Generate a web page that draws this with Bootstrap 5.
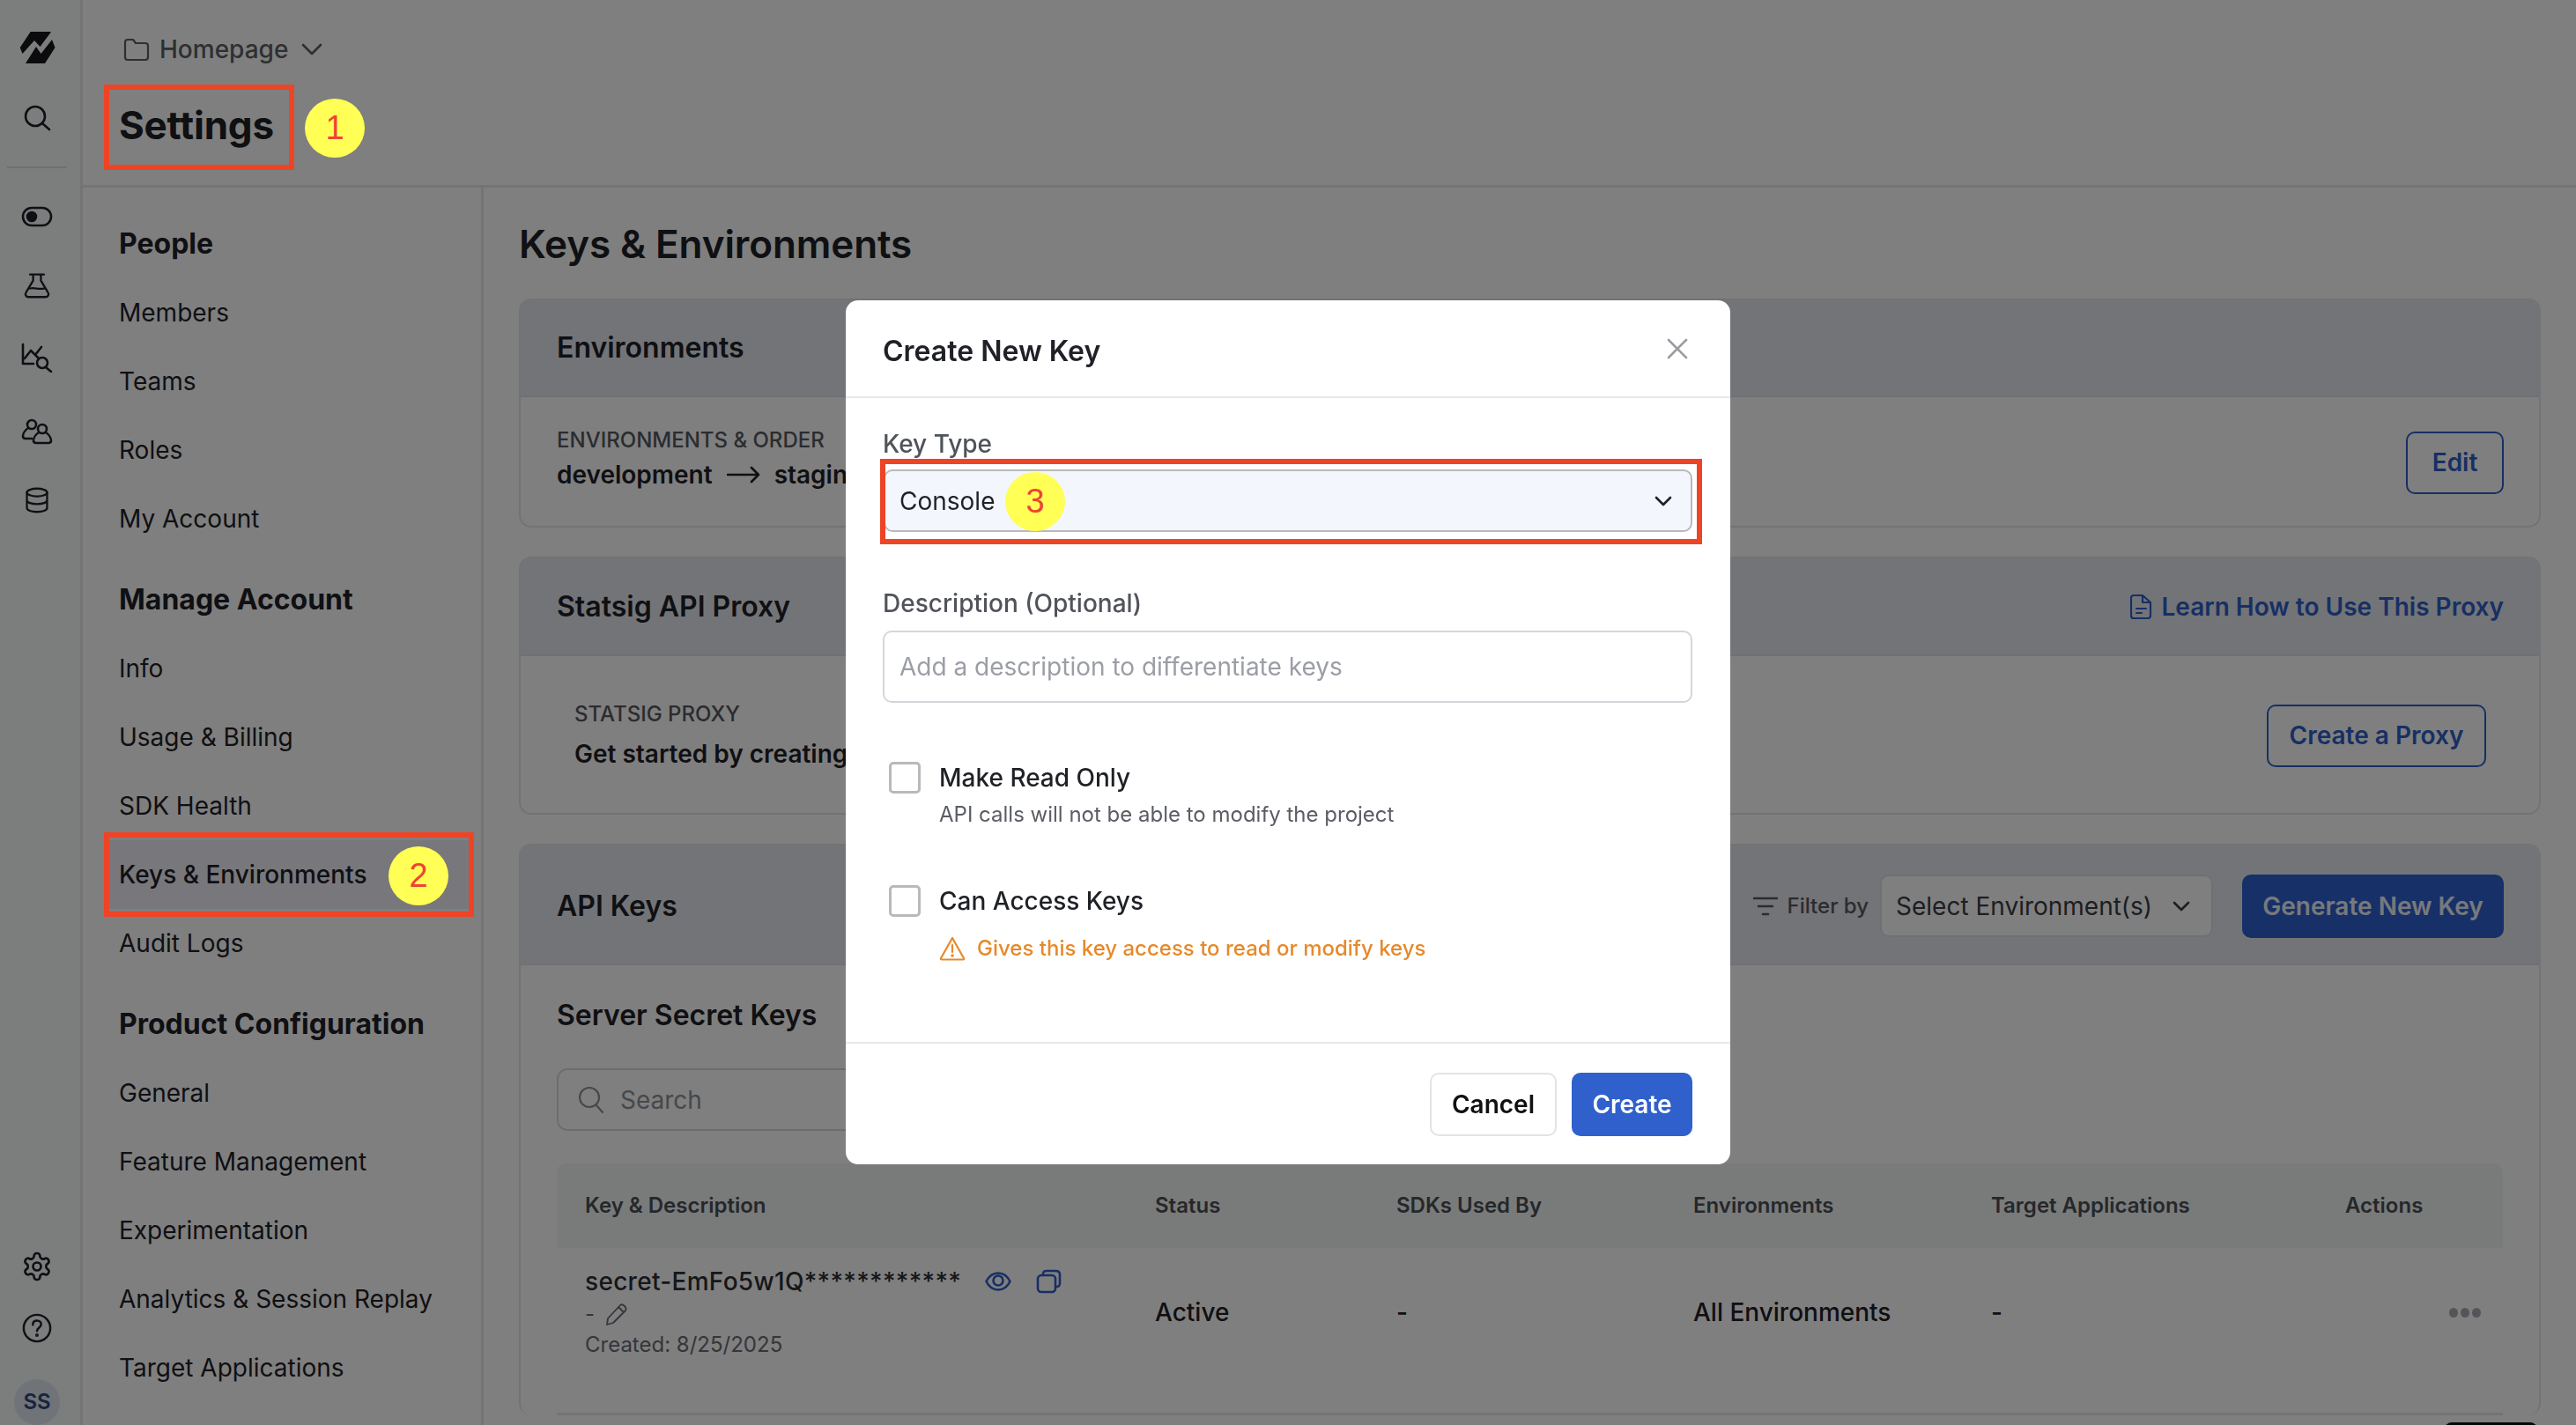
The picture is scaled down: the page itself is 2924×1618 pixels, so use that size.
<!DOCTYPE html>
<html lang="en">
<head>
<meta charset="UTF-8" />
<title>Settings</title>
<link rel="stylesheet" href="https://cdn.jsdelivr.net/npm/bootstrap@5.3.3/dist/css/bootstrap.min.css" />
<style>
  html, body { height: 1618px; overflow: hidden; }
  body { font-family: Inter, "Liberation Sans", sans-serif; font-size: 28px; color: #1f2126; background: #fff; }
  svg { display: block; flex-shrink: 0; }
  .ic { fill: none; stroke: currentColor; stroke-width: 2.6; stroke-linecap: round; stroke-linejoin: round; }
  .ic-thin { stroke-width: 2.2; }
  .ic-hair { stroke-width: 1.8; }

  .app-shell { height: 1618px; }
  .rail { width: 94px; background: #f8fcfc; border-right: 3px solid #e8e9eb; padding: 26px 7px 0 0; flex-shrink: 0; color: #1f2126; }
  .rail-rule { width: 68px; height: 2px; background: #dfe1e4; margin: 38px 0 43px; }
  .rail-search { margin-top: 35px; }
  .rail-flask { margin-top: 51px; }
  .rail-chart { margin-top: 50px; }
  .rail-people { margin-top: 52px; }
  .rail-db { margin-top: 48px; }
  .rail-help { margin-top: 35px; }
  .avatar { width: 52px; height: 52px; background: #e1e6ef; color: #2c4a80; font-size: 24px; font-weight: 600; margin-top: 41px; }

  .top-head { height: 213px; border-bottom: 3px solid #e8e9eb; padding: 36px 0 0 41px; flex-shrink: 0; }
  .crumb { color: #5c5f66; font-weight: 500; gap: 11px; height: 40px; }
  .crumb-folder { margin-left: 5px; }
  .page-title { font-size: 44px; font-weight: 700; line-height: 60px; margin: 36px 0 0; letter-spacing: -0.2px; }

  .side { width: 455px; border-right: 3px solid #e8e9eb; padding: 42px 0 0 41px; flex-shrink: 0; }
  .side-head { font-size: 32px; font-weight: 700; line-height: 44px; margin: 0 0 17px; }
  .side-list { list-style: none; padding: 0; margin-bottom: 31px; }
  .side-list li { height: 78px; line-height: 78px; }
  .side-active { background: #f0f1f8; margin-left: -17px; padding-left: 17px; margin-right: 10px; font-weight: 500; }

  .content { padding: 42px 40px 0 40px; min-width: 0; }
  .content-title { font-size: 44px; font-weight: 600; line-height: 44px; margin: 0 0 40px; letter-spacing: -0.1px; }
  .pane { border: 2px solid #e4e6ea; border-radius: 14px; margin-bottom: 33px; overflow: hidden; }
  .pane-open { overflow: visible; border-bottom: 0; margin-bottom: 0; }
  .pane-head { background: #e6e9ef; border-bottom: 2px solid #e0e2e7; height: 110px; padding: 0 40px 0 41px; font-size: 32px; font-weight: 600; }
  .pane-env { height: 260px; }
  .pane-proxy { height: 293px; }
  .pane-head-proxy { height: 111px; }
  .pane-head-keys { height: 136px; padding-top: 3px; border-radius: 12px 12px 0 0; }
  .micro { font-size: 24px; color: #55585f; font-weight: 500; line-height: 30px; }
  .strong-row { font-weight: 600; line-height: 36px; margin-top: 6px; white-space: nowrap; gap: 16px; }
  .strong-proxy { margin-top: 12px; }
  .pane-env-body { height: 148px; padding: 0 40px 0 41px; }
  .env-text { margin-top: -8px; }
  .pane-proxy-body { height: 180px; padding: 0 60px 0 61px; }
  .btn-line { border: 2px solid #2f5fc9; color: #2f5fc9; border-radius: 10px; height: 71px; font-size: 28px; font-weight: 600; padding: 0; display: inline-flex; align-items: center; justify-content: center; background: transparent; width: 249px; }
  .btn-edit { width: 111px; }
  .link-doc { color: #2f5fc9; font-weight: 600; font-size: 28px; gap: 11px; text-decoration: none; }

  .filter-lab { color: #55585f; font-size: 24px; font-weight: 500; gap: 11px; margin-right: 13px; white-space: nowrap; }
  .env-pick { width: 378px; height: 71px; border: 2px solid #dfe1e5; border-radius: 10px; padding: 0 24px 0 16px; color: #3a3d44; background: #fff; margin-right: 33px; white-space: nowrap; flex-shrink: 0; font-size: 28px; font-weight: 400; }
  .btn-gen { background: #2f60ce; color: #eef2fb; border: 0; border-radius: 10px; height: 72px; width: 297px; font-size: 28px; font-weight: 600; padding: 0; flex-shrink: 0; }
  .sub-head { font-size: 32px; font-weight: 600; line-height: 44px; margin: 35px 0 38px 41px; }
  .search-box { width: 560px; height: 71px; margin-left: 41px; border: 2px solid #d9dbe0; border-radius: 12px; padding: 0 22px; color: #8d9097; gap: 18px; margin-bottom: 37px; }
  .key-table { table-layout: fixed; width: 2209px; margin: 0 0 0 41px; --bs-table-bg: transparent; }
  .col-key { width: 647px; }
  .col-status { width: 274px; }
  .col-sdk { width: 337px; }
  .col-env { width: 338px; }
  .col-target { width: 402px; }
  .key-table th { background: #f2f6f4; height: 96px; font-size: 24px; font-weight: 600; color: #4c4f56; vertical-align: middle; padding: 0 0 0 32px; border: 0; }
  .key-table th:first-child { border-top-left-radius: 10px; }
  .key-table th:last-child { border-top-right-radius: 10px; }
  .key-table td { height: 188px; padding: 12px 0 52px 32px; vertical-align: middle; border-bottom: 3px solid #e8e9eb; font-weight: 500; color: #1f2126; font-size: 28px; }
  .key-line { line-height: 36px; height: 36px; color: #2c2e33; letter-spacing: .3px; }
  .key-line .ico-eye { margin-left: 27px; color: #2f5fc9; }
  .key-line .ico-copy { margin-left: 28px; color: #2f5fc9; }
  .muted-line { color: #6a6d74; height: 38px; gap: 12px; line-height: 38px; font-size: 24px; font-weight: 400; }
  .created { color: #6a6d74; font-size: 24px; font-weight: 400; line-height: 32px; }
  .dots { gap: 3px; justify-content: flex-end; padding-right: 25px; }
  .dots i { width: 10px; height: 11px; border-radius: 50%; background: #a9abb0; display: block; }
  .peek { position: absolute; left: 2775px; top: 1615px; width: 105px; height: 10px; background: #111; border-radius: 8px 8px 0 0; z-index: 1; }

  /* modal */
  .modal-backdrop { --bs-backdrop-opacity: .5; }
  .modal.d-block { overflow: hidden; }
  .key-dialog { max-width: none; width: 1004px; margin: 341px auto 0; }
  .key-dialog .modal-content { height: 981px; border: 0; border-radius: 14px; }
  .key-dialog .modal-header { height: 111px; padding: 0 48px 0 42px; border-bottom: 2px solid #e7e8ea; flex-shrink: 0; }
  .key-dialog .modal-title { font-size: 32px; font-weight: 600; color: #1f2126; margin-top: 6px; }
  .x-close { background: none; border: 0; padding: 0; color: #9a9ca1; }
  .key-dialog .modal-body { padding: 34px 43px 0 42px; flex: 1; }
  .field-lab { display: block; color: #50535a; font-weight: 500; line-height: 36px; margin: 0 0 11px; }
  .field-lab-desc { margin-bottom: 13px; }
  .type-pick { height: 71px; background: #f3f6fd; border: 2px solid #b9b9bb; border-radius: 10px; padding: 0 21px 0 16px; color: #1f2126; margin-bottom: 63px; margin-left: 1px; }
  .desc-box { height: 82px; border: 2px solid #d5d6db; border-radius: 10px; padding: 0 17px; font-size: 28px; color: #1f2126; }
  .desc-box::placeholder { color: #9b9ea5; }
  .desc-box:focus { border-color: #d5d6db; box-shadow: none; }
  .opt-row { gap: 21px; }
  .opt-first { margin-top: 63px; }
  .opt-second { margin-top: 59px; }
  .opt-box { width: 36px; height: 36px; border: 3px solid #b9b9b9; border-radius: 5px; background: #fff; appearance: none; flex-shrink: 0; margin: 4px 0 0 7px; }
  .opt-name { font-weight: 500; line-height: 44px; color: #1f2126; }
  .opt-note { font-size: 24px; color: #5a5d64; line-height: 34px; margin-top: 3px; }
  .opt-warn { font-size: 24px; color: #e58a2c; font-weight: 500; gap: 13px; margin-top: 14px; }
  .key-dialog .modal-footer { height: 139px; padding: 0 43px; gap: 17px; border-top: 2px solid #e7e8ea; flex-shrink: 0; }
  .key-dialog .modal-footer > * { margin: 0; }
  .btn-cancel { width: 144px; height: 72px; border: 2px solid #e2e3e7; border-radius: 10px; background: #fff; color: #111; font-size: 28px; font-weight: 600; padding: 0; }
  .btn-create { width: 137px; height: 72px; border: 0; border-radius: 10px; background: #3060cc; color: #fff; font-size: 28px; font-weight: 600; padding: 0; }

  /* screenshot annotations */
  .note-box { position: absolute; border: 6px solid #ee4426; z-index: 1060; }
  .note-a { left: 118px; top: 96px; width: 216px; height: 97px; }
  .note-b { left: 118px; top: 945px; width: 420px; height: 96px; }
  .note-c { left: 999px; top: 521px; width: 933px; height: 97px; }
  .note-dot { position: absolute; width: 68px; height: 67px; border-radius: 50%; background: #ffff55; color: #ee4433; font-family: "Liberation Sans", sans-serif; font-size: 38px; z-index: 1061; }
  .dot-a { left: 346px; top: 112px; }
  .dot-b { left: 441px; top: 961px; }
  .dot-c { left: 1141px; top: 536px; }
</style>
</head>
<body>
<div class="app-shell d-flex">
  <nav class="rail d-flex flex-column align-items-center">
    <svg width="60" height="56" viewBox="0 0 60 56" fill="#16171b"><path d="M10.7 28 22.700 10H46L44 13 33.500 27 27 20 13.500 35Z"/><path d="M17 46 29 27 34.500 35 47 19 50.500 28 39 46Z"/></svg>
    <svg class="ic rail-search" width="34" height="34" viewBox="0 0 34 34"><circle cx="15" cy="15" r="11"/><path d="M23 23l8 7"/></svg>
    <div class="rail-rule"></div>
    <svg class="ic" width="36" height="24" viewBox="0 0 36 24"><rect x="2" y="2" width="32" height="20" rx="10"/><circle cx="12" cy="12" r="5" fill="currentColor"/></svg>
    <svg class="ic rail-flask" width="30" height="30" viewBox="0 0 34 34"><path d="M8 3h18M12 3v8L3 26c-2 3 0 6 3 6h22c3 0 5-3 3-6L22 11V3"/><path d="M8 21c6-2 11 2 18 0"/></svg>
    <svg class="ic rail-chart" width="36" height="34" viewBox="0 0 36 34"><path d="M2 2v22h12"/><path d="M4 18l7-9 9 9M16 14l7-9"/><circle cx="24" cy="23" r="6"/><path d="M28 28l6 5"/></svg>
    <svg class="ic rail-people" width="36" height="30" viewBox="0 0 36 30"><circle cx="12" cy="7" r="5"/><path d="M8 11c-3 2-6 6-6 9 0 2 1 3 3 3h7"/><circle cx="24" cy="12" r="5"/><path d="M20 16c-3 2-6 6-6 9 0 2 1 3 3 3h14c2 0 3-1 3-3 0-3-3-7-6-9"/></svg>
    <svg class="ic rail-db" width="28" height="30" viewBox="0 0 30 34"><ellipse cx="15" cy="7" rx="13" ry="5"/><path d="M2 7v20c0 3 6 5 13 5s13-2 13-5V7M2 17c0 3 6 5 13 5s13-2 13-5"/></svg>
    <div class="flex-grow-1"></div>
    <svg class="ic ic-hair" width="36" height="36" viewBox="0 0 24 24"><circle cx="12" cy="12" r="3"/><path d="M12.220 2h-.44a2 2 0 0 0-2 2v.18a2 2 0 0 1-1 1.730l-.43.25a2 2 0 0 1-2 0l-.15-.08a2 2 0 0 0-2.730.73l-.22.38a2 2 0 0 0 .73 2.730l.15.1a2 2 0 0 1 1 1.720v.51a2 2 0 0 1-1 1.740l-.15.09a2 2 0 0 0-.73 2.730l.22.38a2 2 0 0 0 2.730.73l.15-.08a2 2 0 0 1 2 0l.43.25a2 2 0 0 1 1 1.730V20a2 2 0 0 0 2 2h.44a2 2 0 0 0 2-2v-.18a2 2 0 0 1 1-1.730l.43-.25a2 2 0 0 1 2 0l.15.08a2 2 0 0 0 2.730-.73l.22-.39a2 2 0 0 0-.73-2.730l-.15-.08a2 2 0 0 1-1-1.740v-.5a2 2 0 0 1 1-1.740l.15-.09a2 2 0 0 0 .73-2.730l-.22-.38a2 2 0 0 0-2.730-.73l-.15.08a2 2 0 0 1-2 0l-.43-.25a2 2 0 0 1-1-1.730V4a2 2 0 0 0-2-2z"/></svg>
    <svg class="ic rail-help" width="34" height="34" viewBox="0 0 36 36"><circle cx="18" cy="18" r="16"/><path d="M13 14c0-3 2-5 5-5s5 2 5 4.500c0 4-5 4-5 8"/><circle cx="18" cy="26.500" r=".8" fill="currentColor"/></svg>
    <div class="avatar rounded-circle d-flex align-items-center justify-content-center">SS</div>
  </nav>

  <div class="flex-grow-1 d-flex flex-column" style="min-width:0">
    <header class="top-head">
      <div class="crumb d-flex align-items-center">
        <svg class="ic ic-thin crumb-folder" width="30" height="28" viewBox="0 0 30 28"><path d="M2 6c0-2 1-3 3-3h6l3 4h11c2 0 3 1 3 3v13c0 2-1 3-3 3H5c-2 0-3-1-3-3z"/></svg>
        <span>Homepage</span>
        <svg class="ic ms-1" width="24" height="14" viewBox="0 0 24 14"><path d="M2 2l10 10L22 2"/></svg>
      </div>
      <h1 class="page-title">Settings</h1>
    </header>

    <div class="d-flex flex-grow-1" style="min-height:0">
      <aside class="side">
        <h2 class="side-head">People</h2>
        <ul class="side-list">
          <li>Members</li><li>Teams</li><li>Roles</li><li>My Account</li>
        </ul>
        <h2 class="side-head">Manage Account</h2>
        <ul class="side-list">
          <li>Info</li><li>Usage &amp; Billing</li><li>SDK Health</li><li class="side-active">Keys &amp; Environments</li><li>Audit Logs</li>
        </ul>
        <h2 class="side-head">Product Configuration</h2>
        <ul class="side-list">
          <li>General</li><li>Feature Management</li><li>Experimentation</li><li>Analytics &amp; Session Replay</li><li>Target Applications</li>
        </ul>
      </aside>

      <main class="content flex-grow-1">
        <h2 class="content-title">Keys &amp; Environments</h2>

        <section class="pane pane-env">
          <div class="pane-head d-flex align-items-center">Environments</div>
          <div class="pane-env-body d-flex align-items-center justify-content-between">
            <div class="env-text">
              <div class="micro">ENVIRONMENTS &amp; ORDER</div>
              <div class="strong-row d-flex align-items-center">development
                <svg class="ic" width="38" height="20" viewBox="0 0 38 20"><path d="M1 10h35M28 2l8 8-8 8"/></svg>
                staging
              </div>
            </div>
            <button class="btn-line btn-edit" type="button">Edit</button>
          </div>
        </section>

        <section class="pane pane-proxy">
          <div class="pane-head pane-head-proxy d-flex align-items-center justify-content-between">
            <span>Statsig API Proxy</span>
            <a class="link-doc d-flex align-items-center" href="#">
              <svg class="ic ic-thin" width="25" height="30" viewBox="0 0 25 30"><path d="M4 2h10l9 8v15c0 2-1 3-3 3H4c-2 0-3-1-3-3V5c0-2 1-3 3-3zM14 2v8h9M7 17h11M7 22h6"/></svg>
              Learn How to Use This Proxy
            </a>
          </div>
          <div class="pane-proxy-body d-flex align-items-center justify-content-between">
            <div>
              <div class="micro">STATSIG PROXY</div>
              <div class="strong-row strong-proxy">Get started by creating a proxy</div>
            </div>
            <button class="btn-line" type="button">Create a Proxy</button>
          </div>
        </section>

        <section class="pane pane-open">
          <div class="pane-head pane-head-keys d-flex align-items-center justify-content-between">
            <span>API Keys</span>
            <div class="d-flex align-items-center">
              <div class="filter-lab d-flex align-items-center">
                <svg class="ic" width="28" height="22" viewBox="0 0 28 22"><path d="M1 2h26M6 11h16M11 20h6"/></svg>
                Filter by
              </div>
              <div class="env-pick d-flex align-items-center justify-content-between">
                <span>Select Environment(s)</span>
                <svg class="ic" width="20" height="12" viewBox="0 0 20 12"><path d="M2 2l8 8 8-8"/></svg>
              </div>
              <button class="btn-gen" type="button">Generate New Key</button>
            </div>
          </div>
          <h3 class="sub-head">Server Secret Keys</h3>
          <div class="search-box d-flex align-items-center">
            <svg class="ic ic-thin" width="30" height="32" viewBox="0 0 30 32"><circle cx="13" cy="13" r="11"/><path d="M21 22l7 8"/></svg>
            <span>Search</span>
          </div>
          <table class="table key-table">
            <colgroup><col class="col-key"><col class="col-status"><col class="col-sdk"><col class="col-env"><col class="col-target"><col></colgroup>
            <thead>
              <tr><th>Key &amp; Description</th><th>Status</th><th>SDKs Used By</th><th>Environments</th><th>Target Applications</th><th>Actions</th></tr>
            </thead>
            <tbody>
              <tr>
                <td>
                  <div class="key-line d-flex align-items-center">
                    <span>secret-EmFo5w1Q************</span>
                    <svg class="ic ico-eye" width="30" height="22" viewBox="0 0 30 22"><path d="M1.500 11C5 4 10 1.500 15 1.500S25 4 28.500 11C25 18 20 20.500 15 20.500S5 18 1.500 11z"/><circle cx="15" cy="10" r="5.500"/></svg>
                    <svg class="ic ico-copy" width="29" height="28" viewBox="0 0 29 28"><rect x="2" y="7" width="20" height="19" rx="4"/><path d="M8 6c0-3 1-4 4-4h10c3 0 5 1 5 4v10c0 3-1 4-4 4"/></svg>
                  </div>
                  <div class="muted-line d-flex align-items-center">
                    <span>-</span>
                    <svg class="ic ic-hair" width="26" height="26" viewBox="0 0 26 26"><path d="M3 18 17 3c1-1 3-1 5 1s2 3 1 5L9 23l-7 2zM15 5l6 6"/></svg>
                  </div>
                  <div class="created">Created: 8/25/2025</div>
                </td>
                <td>Active</td>
                <td>-</td>
                <td>All Environments</td>
                <td>-</td>
                <td><div class="dots d-flex"><i></i><i></i><i></i></div></td>
              </tr>
            </tbody>
          </table>
        </section>
      </main>
    </div>
  </div>
</div>
<div class="peek"></div>

<div class="modal-backdrop fade show"></div>
<div class="modal d-block" tabindex="-1">
  <div class="modal-dialog key-dialog">
    <div class="modal-content">
      <div class="modal-header d-flex align-items-center justify-content-between">
        <h5 class="modal-title">Create New Key</h5>
        <button class="x-close" type="button" aria-label="Close">
          <svg class="ic" width="24" height="24" viewBox="0 0 24 24"><path d="M2 2l20 20M22 2 2 22"/></svg>
        </button>
      </div>
      <div class="modal-body">
        <label class="field-lab">Key Type</label>
        <div class="type-pick d-flex align-items-center justify-content-between">
          <span>Console</span>
          <svg class="ic" width="20" height="12" viewBox="0 0 20 12"><path d="M2 2l8 8 8-8"/></svg>
        </div>
        <label class="field-lab field-lab-desc">Description (Optional)</label>
        <input class="form-control desc-box" type="text" placeholder="Add a description to differentiate keys" />
        <div class="opt-row opt-first d-flex">
          <input class="opt-box" type="checkbox" />
          <div>
            <div class="opt-name">Make Read Only</div>
            <div class="opt-note">API calls will not be able to modify the project</div>
          </div>
        </div>
        <div class="opt-row opt-second d-flex">
          <input class="opt-box" type="checkbox" />
          <div>
            <div class="opt-name">Can Access Keys</div>
            <div class="opt-warn d-flex align-items-center">
              <svg class="ic ic-thin" width="30" height="28" viewBox="0 0 30 28"><path d="M15 2 28 25c.5 1 0 1.500-1 1.500H3c-1 0-1.500-.5-1-1.500zM15 10v8"/><circle cx="15" cy="22" r=".7" fill="currentColor"/></svg>
              <span>Gives this key access to read or modify keys</span>
            </div>
          </div>
        </div>
      </div>
      <div class="modal-footer">
        <button class="btn-cancel" type="button">Cancel</button>
        <button class="btn-create" type="button">Create</button>
      </div>
    </div>
  </div>
</div>

<div class="note-box note-a"></div>
<div class="note-box note-b"></div>
<div class="note-box note-c"></div>
<div class="note-dot dot-a d-flex align-items-center justify-content-center">1</div>
<div class="note-dot dot-b d-flex align-items-center justify-content-center">2</div>
<div class="note-dot dot-c d-flex align-items-center justify-content-center">3</div>

<script src="https://cdn.jsdelivr.net/npm/bootstrap@5.3.3/dist/js/bootstrap.bundle.min.js"></script>
</body>
</html>
